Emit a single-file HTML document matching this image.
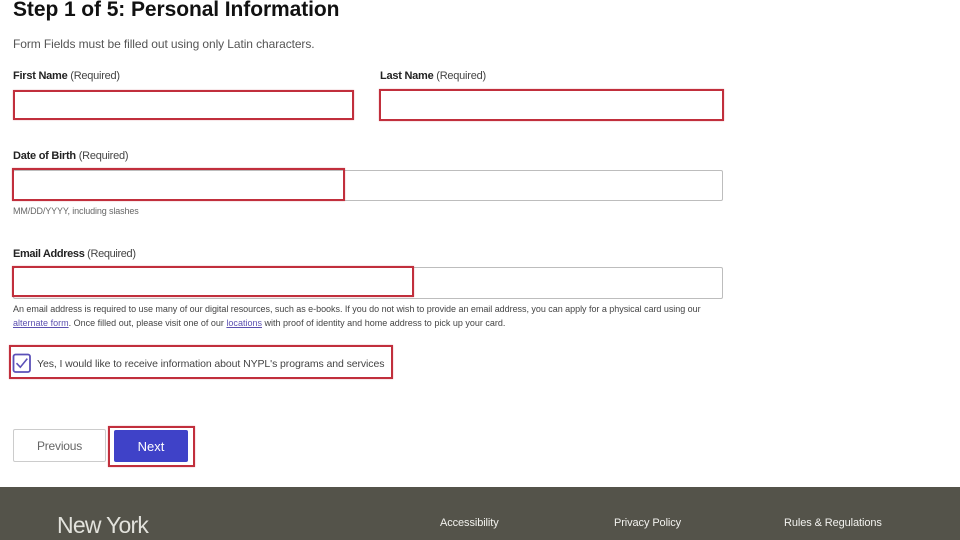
<!DOCTYPE html>
<html lang="en"><head><meta charset="utf-8"><title>Step 1 of 5: Personal Information</title>
<style>
html,body{margin:0;padding:0;background:#fff;width:960px;height:540px;overflow:hidden}
#p{width:960px;height:540px;position:relative;overflow:hidden;font-family:"Liberation Sans",sans-serif}
.t{position:absolute;white-space:nowrap;filter:blur(.25px)}
.l{font-size:11px;line-height:14px;color:#444;letter-spacing:-.24px}
.l b{color:#222;font-weight:bold}
.s{font-size:9px;line-height:12px;color:#444}
.g{position:absolute;box-sizing:border-box;border:1px solid #bdbdbd;border-radius:2px;background:#fff}
.r{position:absolute;box-sizing:border-box;border:2px solid #c12f3c;box-shadow:0 0 1px rgba(193,47,60,.55)}
a{color:#5b4fb0}
.f{font-size:11px;line-height:14px;color:#f2f2ee}
</style></head><body><div id="p">
<h1 class="t" style="left:13px;top:-3px;margin:0;font-size:21px;line-height:26px;color:#111;font-weight:bold;letter-spacing:-.08px">Step 1 of 5: Personal Information</h1>
<p class="t" style="left:13px;top:37px;margin:0;font-size:12px;line-height:15px;color:#555;letter-spacing:-.09px">Form Fields must be filled out using only Latin characters.</p>

<div class="t l" style="left:13px;top:69px"><b>First Name</b> (Required)</div>
<div class="r" style="left:13px;top:90px;width:341px;height:30px"></div>
<div class="t l" style="left:380px;top:69px"><b>Last Name</b> (Required)</div>
<div class="r" style="left:379px;top:89px;width:345px;height:32px"></div>

<div class="t l" style="left:13px;top:149px"><b>Date of Birth</b> (Required)</div>
<div class="g" style="left:13px;top:170px;width:710px;height:31px"></div>
<div class="r" style="left:12px;top:168px;width:333px;height:33px"></div>
<div class="t s" style="left:13px;top:205px;color:#666;letter-spacing:-.13px">MM/DD/YYYY, including slashes</div>

<div class="t l" style="left:13px;top:247px;letter-spacing:-.35px"><b>Email Address</b> (Required)</div>
<div class="g" style="left:13px;top:267px;width:710px;height:32px"></div>
<div class="r" style="left:12px;top:266px;width:402px;height:31px"></div>
<div class="t s" style="left:13px;top:303px;letter-spacing:-.033px">An email address is required to use many of our digital resources, such as e-books. If you do not wish to provide an email address, you can apply for a physical card using our</div>
<div class="t s" style="left:13px;top:317px;letter-spacing:.005px"><a href="#">alternate form</a>. Once filled out, please visit one of our <a href="#">locations</a> with proof of identity and home address to pick up your card.</div>

<div class="r" style="left:9px;top:345px;width:384px;height:34px"></div>
<svg style="position:absolute;left:12px;top:353px" width="19" height="20" viewBox="0 0 19 20"><rect x="1.5" y="1.5" width="16.5" height="17.5" rx="2" fill="#fff" stroke="#5b50b8" stroke-width="1.8"/><path d="M4.5 10.2l3.8 4 7-8.6" fill="none" stroke="#5b50b8" stroke-width="1.6"/></svg>
<div class="t" style="left:37px;top:357px;font-size:10.5px;line-height:14px;color:#444;letter-spacing:-.09px">Yes, I would like to receive information about NYPL's programs and services</div>

<div class="g" style="left:13px;top:429px;width:93px;height:33px;border-color:#ccc"></div>
<div class="t" style="left:13px;top:439px;width:93px;text-align:center;font-size:12px;line-height:15px;color:#666;letter-spacing:-.2px">Previous</div>
<div class="r" style="left:108px;top:426px;width:87px;height:41px"></div>
<div style="position:absolute;left:114px;top:430px;width:74px;height:32px;background:#3f42c8;border-radius:2px"></div>
<div class="t" style="left:114px;top:439px;width:74px;text-align:center;font-size:13px;line-height:15px;color:#fff">Next</div>

<div style="position:absolute;left:0;top:487px;width:960px;height:53px;background:#54534a"></div>
<div class="t" style="left:57px;top:511px;font-size:23px;line-height:28px;color:#e2e2dc;letter-spacing:-.75px">New York</div>
<div class="t" style="left:67px;top:536px;font-size:23px;line-height:28px;color:#d8d8d2">Public</div>
<div class="t f" style="left:440px;top:516px;letter-spacing:-.1px">Accessibility</div>
<div class="t f" style="left:614px;top:516px;letter-spacing:-.1px">Privacy Policy</div>
<div class="t f" style="left:784px;top:516px;letter-spacing:-.1px">Rules &amp; Regulations</div>
</div></body></html>
